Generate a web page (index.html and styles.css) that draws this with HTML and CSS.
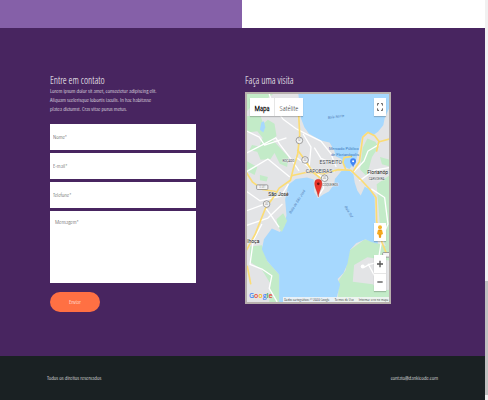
FILE: index.html
```html
<!DOCTYPE html>
<html lang="pt-BR">
<head>
<meta charset="utf-8">
<meta name="viewport" content="width=device-width, initial-scale=1">
<title>Contato</title>
<link rel="stylesheet" href="styles.css">
</head>
<body>
<div class="page">
  <div class="banner"></div>
  <main class="contact">
    <section class="column">
      <h2>Entre em contato</h2>
      <p class="intro">Lorem ipsum dolor sit amet, consectetur adipiscing elit.<br>Aliquam scelerisque lobortis iaculis. In hac habitasse<br>platea dictumst. Cras vitae purus metus.</p>
      <form class="form">
        <input type="text" aria-label="Nome" placeholder="Nome*">
        <input type="email" aria-label="E-mail" placeholder="E-mail*">
        <input type="tel" aria-label="Telefone" placeholder="Telefone*">
        <textarea aria-label="Mensagem" placeholder="Mensagem*"></textarea>
        <button class="send" type="button">Enviar</button>
      </form>
    </section>
    <section class="column">
      <h2>Faça uma visita</h2>
      <div class="map">
        <svg class="map-canvas" viewBox="21 18 429 627" preserveAspectRatio="xMidYMid slice" role="img" aria-label="Mapa de Florianópolis">
          <rect width="480" height="660" fill="#e3e4e6"/>
          <!-- parks -->
          <g fill="#c3ebc8">
            <path d="M20 84H62L70 108 84 96 104 108 110 145 98 156 146 208 142 238 120 228 104 196 92 214 62 216 52 192 28 188 36 172 58 176 68 150 52 130 20 134Z"/>
            <path d="M20 18H100L84 30H30V60L20 70Z"/>
            <path d="M20 220L52 238 44 262 20 250ZM60 262L84 268 80 282 60 278Z"/>
            <path d="M30 478L66 474 82 522 118 562V645H88L92 590 66 548 30 524Z"/>
            <path d="M295 645L298 580 318 550 330 490 376 456 450 480V645Z"/>
            <path d="M384 152L408 162 418 178 398 208 382 266 362 246 370 180ZM422 208L450 216V236L428 230ZM412 290L450 264V500L424 440Z"/>
          </g>
          <path fill="#e3e4e6" d="M344 534L384 510 450 520V608L418 612 400 592 340 584Z"/>
          <!-- bays -->
          <g fill="#a6d8fe">
            <path d="M176 18H450V60L436 92 432 112 416 132 402 142 384 132 368 146 360 180 350 218 330 244 316 238 306 214 288 206 284 188 270 164 244 158 208 138 194 118 184 92Z"/>
            <path d="M146 292L168 274 202 270 222 276 224 314 236 332 252 320 268 312 284 290 286 274 306 250 326 246 342 260 346 286 354 310 364 324 376 298 394 306 406 330 408 400 416 470 396 464 378 456 350 468 332 488 324 530 312 558 294 576 302 592 288 645H118V562L82 522 66 486 72 456 96 424 120 434 134 416 140 384 136 336Z"/>
            <path d="M64 104L72 100 76 118 70 134 60 126Z"/>
          </g>
          <path fill="#c3ebc8" d="M110 396L130 378 142 400 126 434 114 418Z"/>
          <!-- local roads -->
          <g fill="none" stroke="#fff" stroke-width="4" stroke-linejoin="round">
            <path d="M88 18L102 58 130 94 168 122 202 140 244 160 274 198 290 238"/>
            <path d="M20 196L66 172 108 150 120 170 158 220 178 250M20 130L58 148 74 172 140 150M20 252L84 214 150 268"/>
            <path d="M20 312L60 340 124 326 146 290M20 370L70 352 92 382 118 420M20 414L84 392 128 350M66 410L40 460 30 532 66 546 96 566 88 604 112 645"/>
            <path d="M190 138L214 178 208 242 246 268M224 180L244 212 290 232M248 262L252 302 234 330M168 208L218 246 286 252"/>
            <path d="M344 252L374 220 386 190 420 170M360 280L404 248 450 240M396 304L436 330 446 410 428 452 416 526 390 532 372 542M386 530L410 574"/>
          </g>
          <circle cx="370" cy="538" r="6" fill="#fff"/>
          <!-- highways -->
          <g fill="none" stroke="#fbdc75" stroke-width="5" stroke-linejoin="round" stroke-linecap="round">
            <path d="M177 84L180 140 174 198 160 246 152 278 118 302 100 330 76 364 46 440 20 488"/>
            <path d="M20 256L38 284 68 306 106 312M158 264L202 254 254 258 296 246 334 248 364 276 392 306 410 330 412 402 428 466 442 500"/>
            <path d="M174 188L196 218 220 254 242 272M318 244L310 224 314 210 336 206M342 250L360 222 366 178 370 148 386 134 406 144 420 162 450 154M418 164L412 190"/>
            <path d="M22 538L32 590"/>
          </g>
          <g fill="#f4f4f4" stroke="#777" stroke-width="2">
            <circle cx="179" cy="158" r="10"/><circle cx="196" cy="217" r="10"/><circle cx="255" cy="272" r="10"/><circle cx="80" cy="350" r="10"/>
            <rect x="50" y="292" width="34" height="14" rx="3"/><rect x="430" y="496" width="30" height="14" rx="3"/>
          </g>
          <g class="road-label"><text x="179" y="161">101</text><text x="196" y="220">282</text><text x="255" y="275">282</text><text x="80" y="353">282</text><text x="67" y="302">SC-281</text></g>
          <!-- place names -->
          <g class="place">
            <text x="240" y="230">ESTREITO</text>
            <text x="198" y="256">CAPOEIRAS</text>
            <text class="city" x="85" y="326">São José</text>
            <text class="city" x="384" y="258">Florianóp</text>
            <text class="city" x="22" y="466">lhoça</text>
            <text class="small" x="128" y="224">ROÇADO</text>
            <text class="small" x="388" y="277">CARVOEIRA</text>
            <text class="small" x="248" y="297">COQUEIROS</text>
          </g>
          <g class="poi"><text x="268" y="188">Mercado Público</text><text x="274" y="205">de Florianópolis</text></g>
          <g class="bay">
            <text transform="translate(265 93) rotate(-7)">Baía Norte</text>
            <text transform="translate(154 379) rotate(-58)">Baía de São José</text>
            <text transform="translate(315 358) rotate(60)">Baía Sul</text>
          </g>
          <path fill="#4285f4" d="M341 239C338 230 332 228 332 221a9 9 0 0 1 18 0C350 228 344 230 341 239Z"/><circle cx="341" cy="221" r="3" fill="#fff"/>
          <path fill="#ea352b" stroke="#b3261e" d="M236 329C233 309 225 301 225 287a11 12 0 0 1 22 0C247 301 239 309 236 329Z"/><circle cx="236" cy="289" r="4" fill="#701510"/>
        </svg>
        <div class="map-types"><button class="selected" type="button">Mapa</button><button type="button">Satélite</button></div>
        <button class="control fullscreen" type="button" aria-label="Tela cheia">
          <svg viewBox="0 0 18 24"><path fill="none" stroke="#555" stroke-width="3" d="M1 8V2H6M12 2H17V8M17 16V22H12M6 22H1V16"/></svg>
        </button>
        <button class="control pegman" type="button" aria-label="Street View">
          <svg viewBox="0 0 18 42"><circle cx="9" cy="7" r="6" fill="#f8b52c"/><path fill="#f5a91d" d="M3 14H15L18 27 13 29 12 38H6L5 29 0 27Z"/><path fill="#df8418" d="M5 14H13L9 19ZM8 27H10V38H8Z"/></svg>
        </button>
        <div class="zoom">
          <button type="button" aria-label="Aumentar"><svg viewBox="0 0 18 24"><path stroke="#555" stroke-width="4" d="M0 12H18M9 2V22"/></svg></button>
          <button type="button" aria-label="Diminuir"><svg viewBox="0 0 18 24"><path stroke="#555" stroke-width="4" d="M1 12H17"/></svg></button>
        </div>
        <div class="google"><span class="b">G</span><span class="r">o</span><span class="y">o</span><span class="b">g</span><span class="g">l</span><span class="r">e</span></div>
        <div class="credits"><span>Dados cartográficos ©2020 Google</span><a href="#">Termos de Uso</a><a href="#">Informar erro no mapa</a></div>
      </div>
    </section>
  </main>
  <footer class="footer"><span>Todos os direitos reservados</span><a href="mailto:contato@dankicode.com">contato@dankicode.com</a></footer>
</div>
<div class="scrollbar"><div class="thumb"></div></div>
</body>
</html>
```
FILE: styles.css
```css
* { box-sizing: border-box; }
body {
  margin: 0;
  min-height: 100vh;
  display: flex;
  font-family: "Open Sans Condensed Light", "Liberation Sans Narrow", "Open Sans", sans-serif;
  font-size: 6px;
  color: #fff;
}
a { color: inherit; text-decoration: none; }
button, input, textarea { font: inherit; border: 0; border-radius: 0; margin: 0; }
button { padding: 0; background: #fff; }
.page { flex: 1; display: flex; flex-direction: column; }
.banner { height: 28px; background: linear-gradient(90deg, #8560a8 50%, #fff 50%); }
.contact {
  flex: 1;
  display: grid;
  grid-template-columns: 1fr 1fr;
  padding: 45px 45px 44px 50px;
  background: #482560;
}
.column { width: 75%; }
h2 { margin: 0; font-size: 10px; line-height: 14px; font-weight: 300; white-space: nowrap; }
.intro { margin: 0 0 10px; line-height: 9px; white-space: nowrap; }
.form { display: flex; flex-direction: column; gap: 3px; }
.form input { width: 100%; height: 26px; padding: 0 3px; background: #fff; }
.form textarea { width: 100%; height: 72px; padding: 7px 5px; background: #fff; resize: none; }
::placeholder { color: #444; opacity: 1; }
.send {
  width: 34%;
  height: 20px;
  margin-top: 6px;
  border-radius: 10px;
  background: #ff7043;
  color: #fff;
}
.map {
  position: relative;
  margin-top: 5px;
  border: 2px solid #b8b0ad;
  overflow: hidden;
  color: #555;
}
.map-canvas { display: block; width: 100%; }
.place text { font-family: Roboto, sans-serif; font-size: 15px; fill: #3c434c; stroke: #f4f4f4; stroke-width: 2px; paint-order: stroke; }
.place .city { fill: #111; }
.place .small { font-size: 9px; }
.road-label { font-size: 8px; fill: #555; text-anchor: middle; }
.poi { font-family: Roboto, sans-serif; font-size: 12px; fill: #3b78bd; }
.bay { font-family: Roboto, sans-serif; font-size: 11px; fill: #5583ba; font-style: italic; }
.map-types {
  position: absolute;
  top: 4px;
  left: 3px;
  display: flex;
  background: #fff;
  box-shadow: 0 1px 1px #0003;
}
.map-types button { width: 28px; height: 18px; font-size: 8px; color: #333; }
.map-types .selected { width: 25px; font-weight: 700; color: #000; border-right: 1px solid #e6e6e6; }
.control { position: absolute; right: 3px; width: 12px; height: 18px; box-shadow: 0 1px 1px #0003; }
.fullscreen { top: 4px; }
.pegman { bottom: 61px; }
.control svg, .zoom svg { display: block; width: 6px; height: 8px; margin: auto; }
.pegman svg { height: 14px; }
.zoom {
  position: absolute;
  right: 3px;
  bottom: 11px;
  display: flex;
  flex-direction: column;
  background: #fff;
  box-shadow: 0 1px 1px #0003;
}
.zoom button { width: 12px; height: 18px; }
.zoom button + button { border-top: 1px solid #e6e6e6; }
.google { position: absolute; left: 2px; bottom: 1px; font: 600 7px/10px "Open Sans", sans-serif; }
.b { color: #4285f4; }
.r { color: #ea4335; }
.y { color: #fbbc05; }
.g { color: #34a853; }
.credits {
  position: absolute;
  right: 0;
  bottom: 0;
  display: flex;
  gap: 5px;
  padding: 0 1px;
  background: #f3f5f6dd;
  font-size: 4px;
  line-height: 5px;
  color: #111;
  white-space: nowrap;
}
.footer {
  height: 44px;
  display: flex;
  align-items: center;
  justify-content: space-between;
  padding: 0 47px;
  background: #1a2123;
}
.scrollbar { width: 3px; display: flex; flex-direction: column; justify-content: flex-end; padding-bottom: 5px; background: #f1f1f1; }
.thumb { height: 114px; background: #c1c1c1; }
```
